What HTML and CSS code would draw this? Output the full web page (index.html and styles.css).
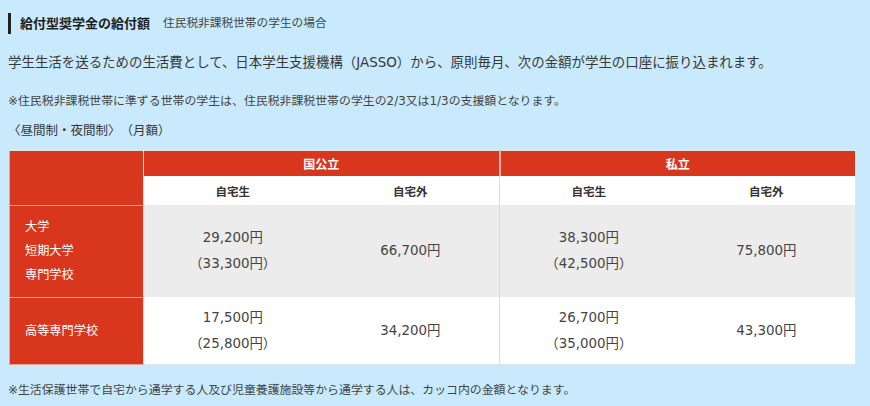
FILE: index.html
```html
<!DOCTYPE html>
<html lang="ja">
<head>
<meta charset="utf-8">
<title>給付型奨学金の給付額</title>
<link rel="stylesheet" href="styles.css">
</head>
<body>
<div class="page">
  <h2 class="heading"><span class="title">給付型奨学金の給付額</span><span class="sub">住民税非課税世帯の学生の場合</span></h2>
  <p class="lead">学生生活を送るための生活費として、日本学生支援機構（JASSO）から、原則毎月、次の金額が学生の口座に振り込まれます。</p>
  <p class="note">※住民税非課税世帯に準ずる世帯の学生は、住民税非課税世帯の学生の2/3又は1/3の支援額となります。</p>
  <p class="caption">〈昼間制・夜間制〉（月額）</p>
  <table class="amounts">
    <colgroup>
      <col class="c-kind">
      <col class="c-val"><col class="c-val">
      <col class="c-val"><col class="c-val">
    </colgroup>
    <thead>
      <tr class="r-group">
        <th class="kind corner" rowspan="2"></th>
        <th class="group" colspan="2">国公立</th>
        <th class="group split" colspan="2">私立</th>
      </tr>
      <tr class="r-sub">
        <th class="sub-h">自宅生</th>
        <th class="sub-h">自宅外</th>
        <th class="sub-h split">自宅生</th>
        <th class="sub-h">自宅外</th>
      </tr>
    </thead>
    <tbody>
      <tr class="r-univ">
        <th class="kind">大学<br>短期大学<br>専門学校</th>
        <td>29,200円<br>（33,300円）</td>
        <td>66,700円</td>
        <td class="split">38,300円<br>（42,500円）</td>
        <td>75,800円</td>
      </tr>
      <tr class="r-kosen">
        <th class="kind">高等専門学校</th>
        <td>17,500円<br>（25,800円）</td>
        <td>34,200円</td>
        <td class="split">26,700円<br>（35,000円）</td>
        <td>43,300円</td>
      </tr>
    </tbody>
  </table>
  <p class="note foot">※生活保護世帯で自宅から通学する人及び児童養護施設等から通学する人は、カッコ内の金額となります。</p>
</div>
</body>
</html>
```

FILE: styles.css
```css
html, body {
  margin: 0;
  padding: 0;
  background: #c8eafc;
}

body {
  font-family: "DejaVu Sans", "Noto Sans CJK JP", sans-serif;
  color: #3a3a3a;
  text-spacing-trim: space-all;
}

.page {
  padding: 13px 8px 0 8px;
}

.heading {
  margin: 0;
  display: flex;
  align-items: center;
  height: 21px;
  border-left: 3px solid #222;
  padding-left: 9px;
  font-weight: normal;
}

.title {
  font-size: 13px;
  font-weight: bold;
  color: #1e1e1e;
  line-height: 21px;
}

.sub {
  font-size: 11.7px;
  color: #444;
  margin-left: 13px;
  line-height: 21px;
}

.lead {
  margin: 19px 0 0 0;
  font-size: 13.45px;
  line-height: 20px;
  color: #383838;
}

.note {
  margin: 19px 0 0 0;
  font-size: 11.9px;
  line-height: 18px;
  color: #444;
}

.caption {
  margin: 12px 0 0 0;
  font-size: 12.5px;
  line-height: 18px;
  color: #383838;
}

.amounts {
  margin: 10px 0 0 1px;
  width: 847px;
  border-collapse: collapse;
  table-layout: fixed;
  border: 1px solid #e4e4e4;
}

.c-kind { width: 134px; }
.c-val { width: 178px; }

.amounts th,
.amounts td {
  padding: 0;
  text-align: center;
  vertical-align: middle;
}

.kind {
  background: #d8361d;
  color: #fff;
  font-weight: normal;
  text-align: left !important;
  padding-left: 15px !important;
  font-size: 12.2px;
  line-height: 24px;
  border: 1px solid #e8a293;
  border-right-color: #e4e4e4;
}

.corner {
  border-top-color: #e4e4e4;
}

.group {
  background: #d8361d;
  color: #fff;
  font-size: 12px;
  font-weight: bold;
  height: 25px;
}

.r-group .group.split {
  border-left: 2px solid #eab0a3;
}

.sub-h {
  background: #fff;
  color: #333;
  font-size: 11.5px;
  font-weight: bold;
  height: 29px;
}

.split {
  border-left: 1px solid #dcdcdc;
}

.r-univ td {
  background: #ececec;
  height: 92px;
}

.r-kosen td {
  background: #fff;
  height: 67px;
}

.amounts td {
  font-size: 13.4px;
  line-height: 26px;
  color: #444;
}

.foot {
  margin-top: 16px;
}
```
